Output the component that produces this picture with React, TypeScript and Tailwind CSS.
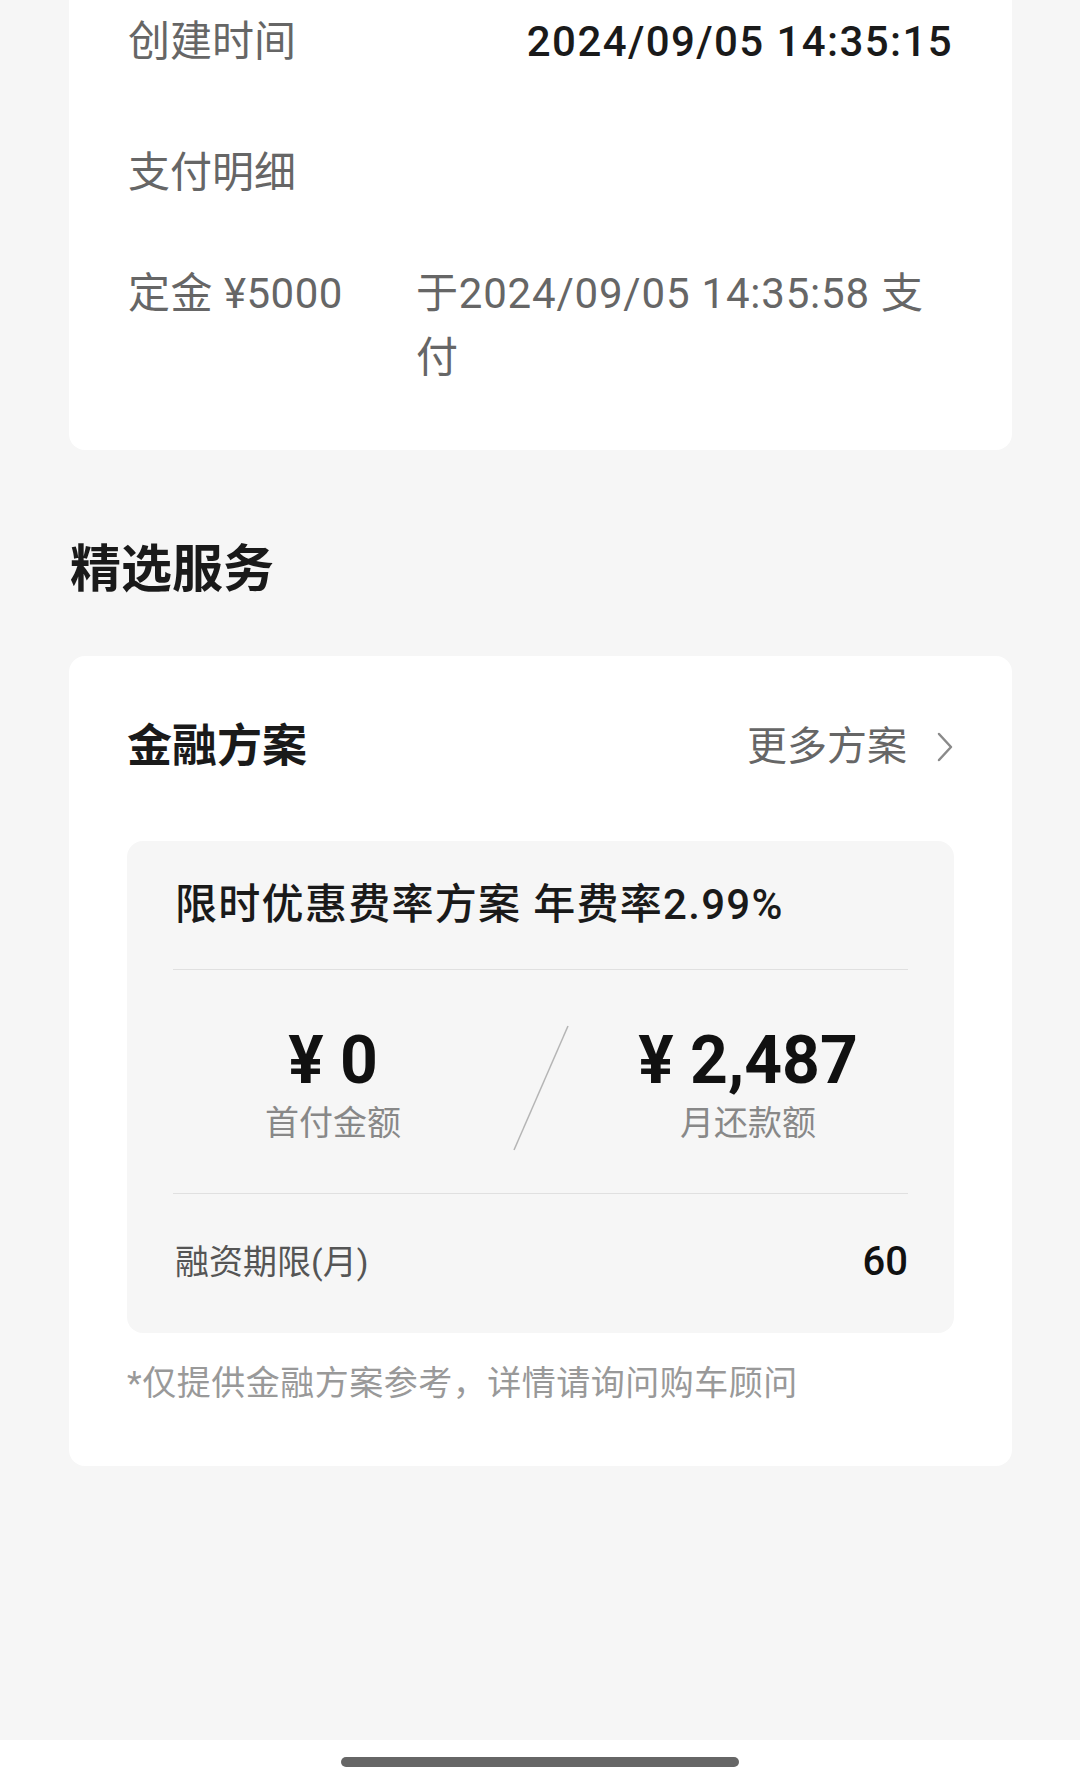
import React from "react";

const font = { fontFamily: "Roboto, 'Noto Sans CJK SC', 'Noto Sans', sans-serif" };

export default function App() {
  return (
    <div className="min-h-[1783px] w-[1080px] bg-[#f6f6f6] flex flex-col" style={font}>
      {/* order info card */}
      <div className="mx-[69px] w-[943px] bg-white rounded-b-[16px] px-[59px] pt-[10px] pb-[60px]">
        <div className="flex justify-between items-center h-[64px] leading-[64px]">
          <span className="text-[42px] text-[#666]">创建时间</span>
          <span className="text-[42px] font-medium text-[#1a1a1a] tracking-[1.4px]">2024/09/05 14:35:15</span>
        </div>
        <div className="mt-[67px] h-[64px] leading-[64px]">
          <span className="text-[42px] text-[#666]">支付明细</span>
        </div>
        <div className="mt-[57px] flex leading-[64px]">
          <span className="w-[288px] shrink-0 text-[42px] text-[#666] tracking-[0.5px]">定金 ¥5000</span>
          <span className="flex-1 text-[42px] text-[#666] tracking-[0.8px]">于2024/09/05 14:35:58 支付</span>
        </div>
      </div>

      <div className="mt-[88px] ml-[70px] h-[64px] leading-[64px] text-[51px] font-bold text-[#1a1a1a]">
        精选服务
      </div>

      {/* finance card */}
      <div className="mt-[54px] mx-[69px] w-[943px] bg-white rounded-[16px] px-[58px] pt-[61px] pb-[60px]">
        <div className="flex items-center justify-between h-[60px]">
          <span className="text-[45px] font-bold text-[#1a1a1a] leading-[60px]">金融方案</span>
          <div className="flex items-center">
            <span className="text-[40px] text-[#666] leading-[60px]">更多方案</span>
            <svg width="18" height="32" viewBox="0 0 18 32" className="ml-[29px]">
              <polyline points="3,3 15,16 3,29" fill="none" stroke="#8a8a8a" strokeWidth="2.5" strokeLinecap="round" strokeLinejoin="round" />
            </svg>
          </div>
        </div>

        <div className="mt-[64px] bg-[#f6f6f6] rounded-[16px] px-[46px] pt-[34px] pb-[46px]">
          <div className="h-[60px] leading-[60px] text-[42px] font-medium text-[#1a1a1a] pl-[2px] tracking-[1.3px]">
            限时优惠费率方案 年费率2.99%
          </div>
          <div className="mt-[34px] h-px bg-[#e0e0e0]" />

          <div className="grid grid-cols-[320px_1fr_320px] pt-[55px] pb-[42px]">
            <div className="flex flex-col items-center">
              <span className="h-[72px] leading-[72px] text-[66px] font-bold text-[#111]">¥ 0</span>
              <span className="mt-[3px] h-[46px] leading-[46px] text-[34px] text-[#888]">首付金额</span>
            </div>
            <div className="flex items-center justify-center">
              <svg width="56" height="126" viewBox="0 0 56 126">
                <line x1="55" y1="1" x2="1" y2="125" stroke="#b5b5b5" strokeWidth="1.5" />
              </svg>
            </div>
            <div className="flex flex-col items-center">
              <span className="h-[72px] leading-[72px] text-[66px] font-bold text-[#111]">¥ 2,487</span>
              <span className="mt-[3px] h-[46px] leading-[46px] text-[34px] text-[#888]">月还款额</span>
            </div>
          </div>

          <div className="h-px bg-[#e0e0e0]" />
          <div className="mt-[43px] flex items-center justify-between h-[50px] leading-[50px]">
            <span className="text-[34px] text-[#555] pl-[2px]">融资期限(月)</span>
            <span className="text-[40px] font-medium text-[#111]">60</span>
          </div>
        </div>

        <div className="mt-[27px] h-[46px] leading-[46px] text-[34px] text-[#999] tracking-[0.5px]">
          *仅提供金融方案参考，详情请询问购车顾问
        </div>
      </div>

      <div className="flex-1" />

      <div className="h-[43px] bg-white flex justify-center pt-[17px]">
        <div className="w-[398px] h-[10px] rounded-full bg-[#666]" />
      </div>
    </div>
  );
}
